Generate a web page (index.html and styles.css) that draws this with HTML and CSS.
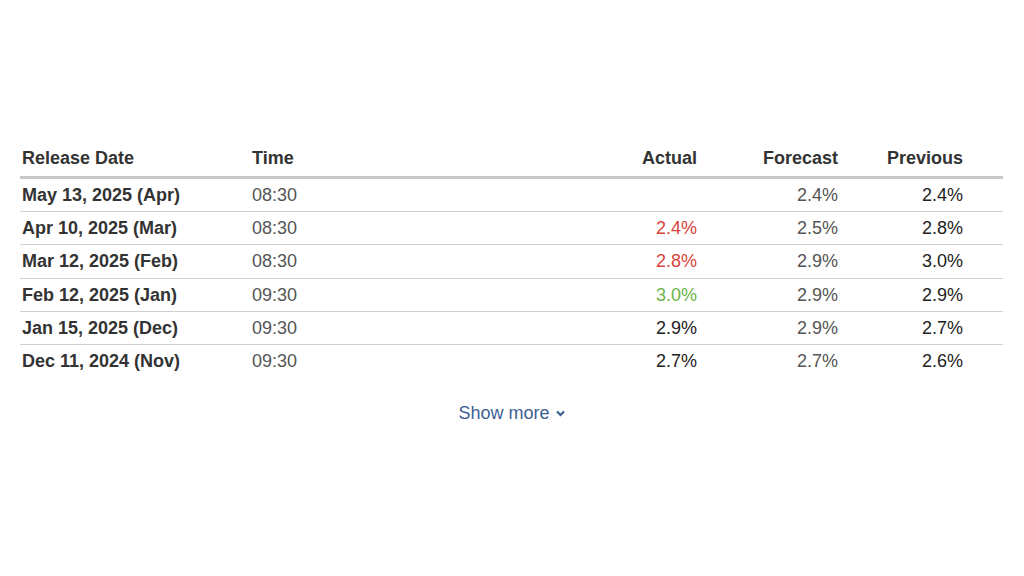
FILE: index.html
```html
<!DOCTYPE html>
<html>
<head>
<meta charset="utf-8">
<link rel="stylesheet" href="styles.css">
</head>
<body>
<div class="wrap">
  <table class="cal">
    <thead>
      <tr>
        <th class="c-date">Release Date</th>
        <th class="c-time">Time</th>
        <th class="c-act num">Actual</th>
        <th class="c-fc num">Forecast</th>
        <th class="c-prev num">Previous</th>
      </tr>
    </thead>
    <tbody>
      <tr><td class="c-date">May 13, 2025 (Apr)</td><td class="c-time">08:30</td><td class="c-act num"></td><td class="c-fc num">2.4%</td><td class="c-prev num">2.4%</td></tr>
      <tr><td class="c-date">Apr 10, 2025 (Mar)</td><td class="c-time">08:30</td><td class="c-act num red">2.4%</td><td class="c-fc num">2.5%</td><td class="c-prev num">2.8%</td></tr>
      <tr><td class="c-date">Mar 12, 2025 (Feb)</td><td class="c-time">08:30</td><td class="c-act num red">2.8%</td><td class="c-fc num">2.9%</td><td class="c-prev num">3.0%</td></tr>
      <tr><td class="c-date">Feb 12, 2025 (Jan)</td><td class="c-time">09:30</td><td class="c-act num green">3.0%</td><td class="c-fc num">2.9%</td><td class="c-prev num">2.9%</td></tr>
      <tr><td class="c-date">Jan 15, 2025 (Dec)</td><td class="c-time">09:30</td><td class="c-act num">2.9%</td><td class="c-fc num">2.9%</td><td class="c-prev num">2.7%</td></tr>
      <tr><td class="c-date">Dec 11, 2024 (Nov)</td><td class="c-time">09:30</td><td class="c-act num">2.7%</td><td class="c-fc num">2.7%</td><td class="c-prev num">2.6%</td></tr>
    </tbody>
  </table>
  <div class="more"><a class="more-link" href="#">Show more <svg class="chev" width="9" height="7" viewBox="0 0 9 7"><path d="M1 1.5 L4.5 5 L8 1.5" fill="none" stroke="currentColor" stroke-width="2.2"/></svg></a></div>
</div>
</body>
</html>
```

FILE: styles.css
```css
html, body {
  margin: 0;
  padding: 0;
  background: #fff;
}
body {
  font-family: "Liberation Sans", Arial, sans-serif;
  color: #333;
}
.wrap {
  padding: 141px 21px 0 20px;
}
.cal {
  width: 983px;
  border-collapse: collapse;
  font-size: 18px;
  table-layout: fixed;
}
.cal th {
  font-weight: bold;
  color: #333;
  height: 35px;
  padding: 0;
  vertical-align: top;
  line-height: 35px;
  border-bottom: 3px solid #c8c8c8;
  text-align: left;
}
.cal td {
  height: 32.2px;
  padding: 0;
  line-height: 32px;
  border-bottom: 1px solid #d0d0d0;
}
.cal tbody tr:last-child td {
  border-bottom: none;
}
.c-date {
  width: 230px;
  padding-left: 2px !important;
}
.cal td.c-date {
  font-weight: bold;
  color: #333;
}
.c-time {
  width: auto;
}
.cal td.c-time {
  color: #555;
}
.c-act {
  width: 100px;
}
.c-fc {
  width: 141px;
}
.c-prev {
  width: 125px;
  padding-right: 40px !important;
}
.cal .num {
  text-align: right;
}
.cal td.c-fc {
  color: #555;
}
.cal td.c-prev, .cal td.c-act {
  color: #222;
}
.cal td.red {
  color: #d9443c;
}
.cal td.green {
  color: #6cb548;
}
.more {
  text-align: center;
  margin-top: 26px;
}
.more-link {
  color: #3d5f94;
  text-decoration: none;
  font-size: 18px;
}
.chev {
  vertical-align: 2px;
  margin-left: 1px;
}
```
